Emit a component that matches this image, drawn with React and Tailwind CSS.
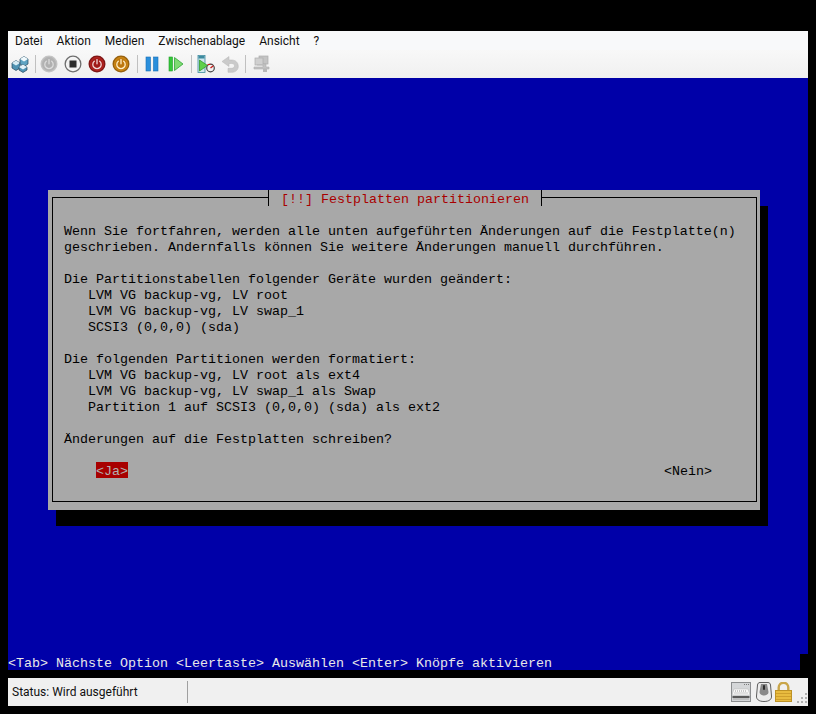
import React from 'react';

const mono = 'font-["Liberation_Mono","DejaVu_Sans_Mono",monospace] text-[13.333px] whitespace-pre';

// Toolbar-Symbole
const PowerGlyph = ({ color }) => (
  <g fill="none" stroke={color} strokeWidth="1.3" strokeLinecap="round">
    <path d="M6.300 6.200a4.200 4.200 0 1 0 5.400 0" />
    <path d="M9 4.600v4.200" />
  </g>
);

const RoundButton = ({ outer, inner, ring, children }) => (
  <svg width="18" height="18" viewBox="0 0 18 18">
    <circle cx="9" cy="9" r="8.500" fill={ring} />
    <circle cx="9" cy="9" r="7.200" fill={outer} />
    <circle cx="9" cy="9" r="5.800" fill={inner} />
    {children}
  </svg>
);

const HostIcon = () => (
  <svg width="18" height="18" viewBox="0 0 18 18">
    <path d="M1 8l4-2.500L9 8v5l-4 2.500L1 13z" fill="#4f93b3" stroke="#24465c" strokeWidth=".7" />
    <path d="M1 8l4 2.500L9 8 5 5.500z" fill="#d8edf5" />
    <path d="M9 4l4-2.500L17 4v5l-4 2.500L9 9z" fill="#5ea3c2" stroke="#24465c" strokeWidth=".7" />
    <path d="M9 4l4 2.500L17 4l-4-2.500z" fill="#f0f9fc" />
    <path d="M8 12l4-2.500 4 2.500v3l-4 2.500-4-2.500z" fill="#4f93b3" stroke="#24465c" strokeWidth=".7" />
    <path d="M8 12l4 2.500 4-2.500-4-2.500z" fill="#e4f2f8" />
  </svg>
);

const PauseIcon = () => (
  <svg width="14" height="16" viewBox="0 0 14 16">
    <rect x="1" y="1" width="4.500" height="14" fill="#2a8fdc" stroke="#1a6fb5" strokeWidth=".6" />
    <rect x="8.500" y="1" width="4.500" height="14" fill="#2a8fdc" stroke="#1a6fb5" strokeWidth=".6" />
  </svg>
);

const ResumeIcon = () => (
  <svg width="16" height="16" viewBox="0 0 16 16">
    <rect x="1" y="1" width="3.500" height="14" fill="#35c83a" stroke="#239c2a" strokeWidth=".6" />
    <path d="M6.500 1.500L15 8l-8.500 6.500z" fill="#7edb72" stroke="#2ea336" strokeWidth=".8" />
  </svg>
);

const SnapshotIcon = () => (
  <svg width="18" height="18" viewBox="0 0 18 18">
    <rect x="1" y=".5" width="7" height="17" fill="#cfe6ee" stroke="#3d8a9e" strokeWidth=".8" />
    <rect x="1.500" y="1" width="6" height="2.500" fill="#3d8a9e" />
    <path d="M2.500 5l8 5.500-8 5.500z" fill="#5fd04c" stroke="#2f9a2a" strokeWidth=".8" />
    <circle cx="13.500" cy="13" r="3.800" fill="#f2f2f2" stroke="#444" strokeWidth="1.200" />
    <path d="M13.500 13l2.800-2.200" stroke="#c8201c" strokeWidth="1.400" />
    <path d="M10.500 9.500h3" stroke="#c8201c" strokeWidth="1" />
  </svg>
);

const UndoIcon = () => (
  <svg width="18" height="17" viewBox="0 0 18 17">
    <path d="M8 .500L1 5.500l7 5V7.500h2.500c2 0 3 .9 3 2.300 0 1.500-1.100 2.500-3 2.500H7v4h3.800c3.900 0 6.500-2.600 6.500-6 0-3.300-2.500-6.300-6.500-6.300H8z" fill="#cacaca" stroke="#b6b6b6" strokeWidth=".5" />
  </svg>
);

const RevertIcon = () => (
  <svg width="18" height="18" viewBox="0 0 18 18">
    <rect x="6" y="1" width="9" height="8" fill="#c4c4c4" stroke="#adadad" strokeWidth=".7" />
    <rect x="2" y="3" width="8" height="7" fill="#d0d0d0" stroke="#adadad" strokeWidth=".7" />
    <path d="M4 10h6v2H1v2h15v-2h-3V9h-3" fill="#c2c2c2" stroke="#b0b0b0" strokeWidth=".6" />
    <path d="M10 14h4v3h-4z" fill="#b8b8b8" />
  </svg>
);

const KeyboardIcon = () => (
  <svg width="20" height="20" viewBox="0 0 20 20">
    <rect x=".5" y=".5" width="19" height="19" fill="#d4d6d8" stroke="#8a8c8e" />
    <path d="M13 2.500h1M15 2.500h1M17 2.500h1" stroke="#7a7a7a" />
    <path d="M3 7h14l2 6H1z" fill="#f8f8f8" stroke="#b5b5b5" strokeWidth=".5" />
    <path d="M4 9h12M3.500 11h13" stroke="#989898" strokeDasharray="1 1" />
    <path d="M1.500 15h17" stroke="#3a3a3a" strokeWidth="1.600" />
    <path d="M2 17h16" stroke="#a8a8a8" />
  </svg>
);

const MouseIcon = () => (
  <svg width="16" height="20" viewBox="0 0 16 20">
    <path d="M4 .500h8c1.500 0 2.300 1 2.500 2.500l1 11c.3 3-2 5.500-7.500 5.500S.2 17 .5 14l1-11C1.700 1.500 2.500.5 4 .5z" fill="#ececec" stroke="#5e5e5e" />
    <path d="M5 2h6l1.500 8c.3 2-2 3.500-4.500 3.500S3.200 12 3.500 10z" fill="#8a8a8a" />
    <rect x="7" y="3" width="2" height="5" rx="1" fill="#2e2e2e" />
  </svg>
);

const LockIcon = () => (
  <svg width="17" height="20" viewBox="0 0 17 20">
    <path d="M3.700 9V5.500a4.800 4.800 0 0 1 9.600 0V9" fill="none" stroke="#c9a64a" strokeWidth="2.400" />
    <rect x=".5" y="8.500" width="16" height="11" fill="#e8bb3f" stroke="#bd9226" />
    <path d="M1 11.500h15M1 14.500h15M1 17.500h15" stroke="#cf9f2c" />
  </svg>
);

const Grip = () => (
  <div className="grid grid-cols-3 gap-[2px] w-[10px] h-[10px] ml-[5px] mr-px self-end mb-[3px]">
    <span /><span /><span className="bg-[#b0b0b0]" />
    <span /><span className="bg-[#b0b0b0]" /><span className="bg-[#b0b0b0]" />
    <span className="bg-[#b0b0b0]" /><span className="bg-[#b0b0b0]" /><span className="bg-[#b0b0b0]" />
  </div>
);

const Slot = ({ children }) => <div className="w-6 h-6 flex items-center justify-center">{children}</div>;

const ToolSep = ({ className }) => <div className={`w-px h-[18px] bg-[#c0c0c0] ${className}`} />;

const menus = ['Datei', 'Aktion', 'Medien', 'Zwischenablage', 'Ansicht', '?'];

const textRows = [
  'Wenn Sie fortfahren, werden alle unten aufgeführten Änderungen auf die Festplatte(n)',
  'geschrieben. Andernfalls können Sie weitere Änderungen manuell durchführen.',
  '',
  'Die Partitionstabellen folgender Geräte wurden geändert:',
  '   LVM VG backup-vg, LV root',
  '   LVM VG backup-vg, LV swap_1',
  '   SCSI3 (0,0,0) (sda)',
  '',
  'Die folgenden Partitionen werden formatiert:',
  '   LVM VG backup-vg, LV root als ext4',
  '   LVM VG backup-vg, LV swap_1 als Swap',
  '   Partition 1 auf SCSI3 (0,0,0) (sda) als ext2',
  '',
  'Änderungen auf die Festplatten schreiben?',
];

export default function App() {
  return (
    <div className='w-[816px] h-[714px] bg-black pt-[31px] px-2 font-["Roboto",sans-serif] text-xs text-[#111] overflow-hidden'>
      {/* Menüleiste */}
      <div className="flex items-center gap-[14px] pl-[7px] h-[19px] bg-[#f8f9fa]">
        {menus.map((label) => (
          <span key={label}>{label}</span>
        ))}
      </div>

      {/* Toolbar */}
      <div className="flex items-center h-[28px] bg-gradient-to-b from-[#f8f8f8] to-[#f0f0f0]">
        <Slot><HostIcon /></Slot>
        <ToolSep className="ml-[3px] mr-px" />
        <Slot><RoundButton ring="#c4c4c4" outer="#b4b4b4" inner="#b0b0b0"><PowerGlyph color="#dcdcdc" /></RoundButton></Slot>
        <Slot><RoundButton ring="#6e6e6e" outer="#f6f6f6" inner="#f0f0f0"><rect x="5.500" y="5.500" width="7" height="7" fill="#2b2b2b" /></RoundButton></Slot>
        <Slot><RoundButton ring="#7e1616" outer="#b02420" inner="#a01a18"><PowerGlyph color="#f2d8d8" /></RoundButton></Slot>
        <Slot><RoundButton ring="#96600e" outer="#c98514" inner="#bd770e"><PowerGlyph color="#fff0c8" /></RoundButton></Slot>
        <ToolSep className="ml-1 mr-[2px]" />
        <Slot><PauseIcon /></Slot>
        <Slot><ResumeIcon /></Slot>
        <ToolSep className="ml-[3px] mr-[2px]" />
        <Slot><SnapshotIcon /></Slot>
        <Slot><UndoIcon /></Slot>
        <ToolSep className="ml-[3px] mr-1" />
        <Slot><RevertIcon /></Slot>
      </div>

      {/* VM-Bildschirm */}
      <div className={`bg-[#0000a8] h-[576px] pt-28 pl-10 ${mono}`}>
        <div className="w-[712px] h-80 bg-[#a8a8a8] shadow-[8px_16px_0_#000] pt-[7px] pl-1">
          <div className="relative w-[705px] h-[305px] border border-black px-[11px] pt-6 text-black leading-[19px]">
            {/* Titel über dem Rahmen */}
            <div className="absolute left-[215px] -top-[8px] h-4 flex bg-[#a8a8a8] border-x border-black px-3 text-[#a80000]">
              [!!] Festplatten partitionieren
            </div>
            {textRows.map((row, i) => (
              <div key={i} className="h-4">{row}</div>
            ))}
            <div className="flex justify-between mt-4 pl-8 pr-[33px]">
              <span className="h-4 bg-[#a80000] text-[#b0b0b0]">{'<Ja>'}</span>
              <span className="h-4">{'<Nein>'}</span>
            </div>
          </div>
        </div>
      </div>

      {/* Hilfezeile der Konsole */}
      <div className={`w-[792px] h-4 leading-[19px] bg-[#0000a8] text-[#e8e8e8] ${mono}`}>
        {'<Tab> Nächste Option <Leertaste> Auswählen <Enter> Knöpfe aktivieren'}
      </div>

      {/* Statusleiste */}
      <div className="flex items-center h-7 mt-2 bg-[#f0f0f0]">
        <span className="w-[179px] pl-1">Status: Wird ausgeführt</span>
        <div className="w-px h-[22px] bg-[#a0a0a0]" />
        <div className="flex-1" />
        <KeyboardIcon />
        <div className="ml-[5px]"><MouseIcon /></div>
        <div className="ml-[3px]"><LockIcon /></div>
        <Grip />
      </div>
    </div>
  );
}
